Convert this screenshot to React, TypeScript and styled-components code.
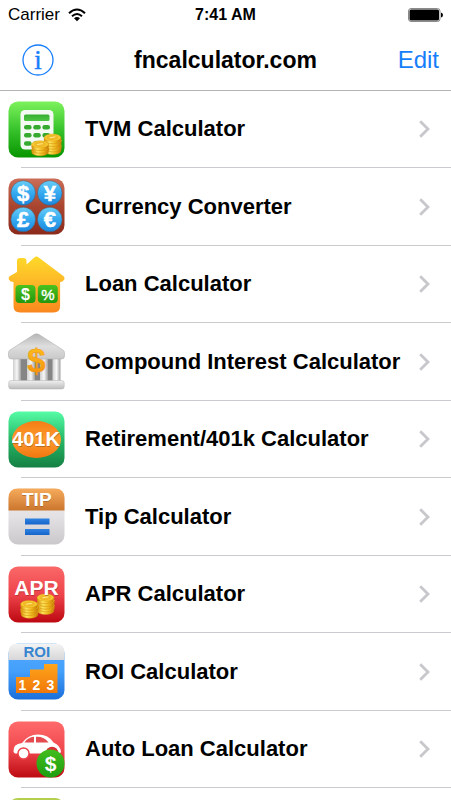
import React from "react";
import styled, { createGlobalStyle } from "styled-components";

const GlobalStyle = createGlobalStyle`
  * { box-sizing: border-box; }
  body {
    margin: 0;
    background: #fff;
    color: #000;
    font-family: "Liberation Sans", Arial, Helvetica, sans-serif;
  }
`;

const Screen = styled.div`
  display: flex;
  flex-direction: column;
  height: 100vh;
  overflow: hidden;
`;

const TopBar = styled.header`
  flex: none;
  border-bottom: 1px solid #b4b4b4;
`;

const StatusBar = styled.div`
  display: grid;
  grid-template-columns: 1fr auto 1fr;
  align-items: center;
  height: 30px;
  padding: 0 8px;
`;

const Carrier = styled.div`
  display: flex;
  align-items: center;
  gap: 8px;
  font-size: 17px;
  line-height: 20px;
`;

const Clock = styled.time`
  font-size: 16px;
  line-height: 20px;
  font-weight: bold;
`;

const Battery = styled.svg`
  justify-self: end;
`;

const NavBar = styled.nav`
  display: grid;
  grid-template-columns: 1fr auto 1fr;
  align-items: center;
  height: 60px;
  padding: 0 12px;
`;

const Title = styled.h1`
  margin: 0;
  font-size: 23px;
  line-height: 28px;
  font-weight: bold;
`;

const BarButton = styled.button<{ $end?: boolean }>`
  justify-self: ${(p) => (p.$end ? "end" : "start")};
  display: flex;
  padding: ${(p) => (p.$end ? "0" : "0 10px")};
  border: 0;
  background: none;
  color: #177efb;
  font-family: inherit;
  font-size: 24px;
  line-height: 28px;
  cursor: pointer;
`;

const List = styled.ul`
  flex: 1;
  min-height: 0;
  overflow: hidden;
  margin: 0;
  padding: 0;
  list-style: none;
`;

const Row = styled.li`
  display: flex;
  flex-direction: column;
  height: 77px;
  &:nth-child(even) { height: 78px; }
  &::after {
    content: "";
    height: 1px;
    margin-left: 21px;
    background: #cbcacf;
  }
`;

const RowLink = styled.a`
  flex: 1;
  display: flex;
  align-items: center;
  padding: 0 21px 0 8px;
  color: inherit;
  text-decoration: none;
`;

const RowLabel = styled.span`
  flex: 1;
  margin-left: 20px;
  font-size: 22px;
  line-height: 28px;
  font-weight: bold;
  white-space: nowrap;
`;

const ChevronSvg = styled.svg`
  flex: none;
  display: block;
`;

const IconSvg = styled.svg`
  flex: none;
  display: block;
  font-family: "Liberation Sans", Arial, sans-serif;
  font-weight: bold;
`;

type IconProps = { id: string; stops?: string[]; children?: React.ReactNode };

function Icon({ id, stops, children }: IconProps) {
  return (
    <IconSvg width="57" height="57" viewBox="0 0 57 57" aria-hidden="true">
      {stops && <Gradient id={id} stops={stops} />}
      {stops && <rect x="0.5" y="0.5" width="56" height="56" rx="9.5" fill={`url(#${id})`} />}
      {children}
    </IconSvg>
  );
}

function Gradient({ id, stops, across }: { id: string; stops: string[]; across?: boolean }) {
  return (
    <defs>
      <linearGradient id={id} x1="0" y1="0" x2={across ? 1 : 0} y2={across ? 0 : 1}>
        {stops.map((c, i) => (
          <stop key={i} offset={i / (stops.length - 1)} stopColor={c} />
        ))}
      </linearGradient>
    </defs>
  );
}

function Coins({ id, x, y, levels }: { id: string; x: number; y: number; levels: number }) {
  const layers = Array.from({ length: levels }, (_, i) => levels - 1 - i);
  return (
    <g transform={`translate(${x} ${y})`}>
      <Gradient id={id} across stops={["#d98f08", "#ffe45c", "#f0b61c", "#c87a04"]} />
      {layers.map((n) => (
        <g key={n} transform={`translate(${n % 2 ? 0.5 : 0} ${n * 2.7})`}>
          <path d="M-8.3 0v2.4c0 5 16.6 5 16.6 0V0z" fill={`url(#${id})`} stroke="#c98a0c" strokeWidth="0.4" />
          <ellipse rx="8.3" ry="3.6" fill="#f8cb32" stroke="#d79a14" strokeWidth="0.4" />
        </g>
      ))}
      <ellipse rx="5.6" ry="2.1" fill="#f3bc2a" stroke="#dfa31c" strokeWidth="0.4" />
      <path d="M-3 .3 2.8-.7" stroke="#ffe889" strokeWidth="1" />
    </g>
  );
}

function TvmIcon() {
  return (
    <Icon id="tvm" stops={["#7cf25c", "#38c32c", "#079500"]}>
      <rect x="12.5" y="9" width="33" height="39.5" rx="4.5" fill="#f4faf3" />
      <Gradient id="tvmKey" stops={["#35ae30", "#4fc544"]} />
      <rect x="16" y="13.5" width="25.5" height="6.5" rx="1.5" fill="url(#tvmKey)" />
      {[26.3, 34.3, 42.5].map((y) =>
        [16, 25.2, 34.4].map((x) => (
          <rect key={`${x}-${y}`} x={x} y={y - 2.2} width="7.6" height="4.5" rx="2.1" fill="#35aa2e" />
        )),
      )}
      <Coins id="tvmCoinB" x={44.5} y={36.5} levels={5} />
      <Coins id="tvmCoinA" x={32} y={43.3} levels={3} />
    </Icon>
  );
}

function CurrencyIcon() {
  const coins = [
    { s: "$", x: 15.2, y: 15 },
    { s: "¥", x: 41.8, y: 15 },
    { s: "£", x: 15.2, y: 41.5 },
    { s: "€", x: 41.8, y: 41.5 },
  ];
  return (
    <Icon id="cur" stops={["#cb6d58", "#a9452f", "#8b2a1b"]}>
      <Gradient id="curBall" stops={["#69cdf8", "#35aaf0", "#1b86dc"]} />
      {coins.map((c) => (
        <g key={c.s}>
          <circle cx={c.x} cy={c.y} r="12.3" fill="url(#curBall)" stroke="#53505c" strokeWidth="0.5" />
          <text x={c.x} y={c.y + 7.5} textAnchor="middle" fontSize="22" fill="#fff" stroke="#fff" strokeWidth="0.5">
            {c.s}
          </text>
        </g>
      ))}
    </Icon>
  );
}

function LoanIcon() {
  return (
    <Icon id="loan">
      <Gradient id="house" stops={["#fdd929", "#fdb527", "#fb871e"]} />
      <Gradient id="tag" stops={["#4ac21e", "#23970d"]} />
      <path
        d="M9 16V5q0-3 3-3h3.500q3 0 3 3v3.500L26.300 1.500q2.200-1.800 4.400 0L55.300 20q1.900 1.600.8 3.800-1.300 2.200-4 2.200V50q0 6.500-6.500 6.500h-33.600Q5.500 56.500 5.500 50V26Q2 26 1 23.800 0 21.500 2 20z"
        fill="url(#house)"
      />
      <rect x="7.500" y="29" width="20" height="18" rx="4" fill="url(#tag)" />
      <rect x="29.800" y="29" width="20" height="18" rx="4" fill="url(#tag)" />
      <text x="17.500" y="43.500" textAnchor="middle" fontSize="16" fill="#fff">$</text>
      <text x="39.800" y="43.500" textAnchor="middle" fontSize="15" fontWeight="normal" fill="#fff" stroke="#fff" strokeWidth="0.400">%</text>
    </Icon>
  );
}

function CompoundIcon() {
  return (
    <Icon id="bank">
      <Gradient id="roof" stops={["#b5b5b5", "#dedede", "#c9c9c9"]} />
      <Gradient id="pillar" across stops={["#cfcfcf", "#f7f7f7", "#a0a0a0"]} />
      <Gradient id="base" stops={["#f0f0f0", "#bcbcbc"]} />
      <Gradient id="dollar" stops={["#ffc61e", "#f38c0d"]} />
      <rect x="6" y="26" width="45" height="22" fill="#858585" />
      {[5, 19, 32, 44.500].map((x) => (
        <rect key={x} x={x} y="26" width="8" height="22" fill="url(#pillar)" />
      ))}
      <path d="M26 1.500q2.500-1.500 5 0L55 17q1.500 1 1.500 3v3q0 3-3 3h-50q-3 0-3-3v-3q0-2 1.500-3z" fill="url(#roof)" stroke="#a8a8a8" strokeWidth="0.5" />
      <rect x="0.700" y="47.500" width="55.500" height="8.500" rx="2.500" fill="url(#base)" stroke="#b0b0b0" strokeWidth="0.500" />
      <text x="28.500" y="38.500" textAnchor="middle" fontSize="33" fill="url(#dollar)" stroke="#e8910f" strokeWidth="0.400">$</text>
    </Icon>
  );
}

function RetirementIcon() {
  return (
    <Icon id="ret" stops={["#55fca6", "#26b767", "#158042"]}>
      <Gradient id="egg" stops={["#f47d16", "#ff9b2e", "#f07610"]} />
      <ellipse cx="28.500" cy="28.500" rx="24.500" ry="18.500" fill="url(#egg)" />
      <text x="28.400" y="35.800" textAnchor="middle" fontSize="20" fill="#7d4b14" opacity="0.5">401K</text>
      <text x="28" y="35" textAnchor="middle" fontSize="20" fill="#fff">401K</text>
    </Icon>
  );
}

function TipIcon() {
  return (
    <Icon id="tip" stops={["#f0eff0", "#e3e1e3", "#cac8ca"]}>
      <Gradient id="tipTop" stops={["#f6ab5c", "#cb762d"]} />
      <Gradient id="tipBar" stops={["#2d83e2", "#1763ca"]} />
      <path d="M.5 22.500V10q0-9.500 9.500-9.500h37q9.500 0 9.500 9.500v12.500z" fill="url(#tipTop)" />
      <text x="28.800" y="19" textAnchor="middle" fontSize="19" fill="#8a531e" opacity="0.5">TIP</text>
      <text x="28.800" y="18" textAnchor="middle" fontSize="19" fill="#fff">TIP</text>
      <rect x="17" y="30.500" width="24.500" height="6" fill="url(#tipBar)" />
      <rect x="17" y="41" width="24.500" height="6" fill="url(#tipBar)" />
    </Icon>
  );
}

function AprIcon() {
  return (
    <Icon id="apr" stops={["#fa6868", "#ee444b", "#bd0811"]}>
      <Coins id="aprCoinB" x={37.500} y={31.500} levels={5} />
      <text x="28.800" y="29.500" textAnchor="middle" fontSize="21" fill="#7d141b" opacity="0.4">APR</text>
      <text x="28.500" y="28.700" textAnchor="middle" fontSize="21" fill="#fff">APR</text>
      <Coins id="aprCoinA" x={21} y={38} levels={4} />
    </Icon>
  );
}

function RoiIcon() {
  return (
    <Icon id="roi" stops={["#56abff", "#439ffa", "#1b6fda"]}>
      <Gradient id="roiTop" stops={["#f4f4f4", "#d7d7d9"]} />
      <Gradient id="steps" stops={["#ffa51b", "#f0780a"]} />
      <path d="M.5 17V10Q.5.500 10 .5h37q9.500 0 9.500 9.500v7z" fill="url(#roiTop)" />
      <text x="28.800" y="14.400" textAnchor="middle" fontSize="15" fill="#3585d0">ROI</text>
      <path d="M8 50V34h14v-7.500h14V21h13.500v29z" fill="url(#steps)" />
      {["1", "2", "3"].map((n, i) => (
        <text key={n} x={14.500 + i * 14} y="47" textAnchor="middle" fontSize="14" fill="#fff">{n}</text>
      ))}
    </Icon>
  );
}

function AutoIcon() {
  return (
    <Icon id="auto" stops={["#ff6a6a", "#f0484e", "#bd0a13"]}>
      <path d="M5.500 31q-1-8 8.500-9 6-8.500 16-8.500 10.500 0 15.500 8 7 3 7.500 9.500l-1.500 1.500H7z" fill="#fff" />
      <path d="M16.500 21.500q3.500-5.300 9.500-5.700v5.700zM28 15.800q8.500-.3 12.500 5.700H28z" fill="#e34b50" />
      <circle cx="15.500" cy="32.500" r="6.300" fill="#ec4249" />
      <circle cx="15.500" cy="32.500" r="4.800" fill="#fff" />
      <circle cx="44" cy="32" r="6.300" fill="#d92e35" />
      <Gradient id="badge" stops={["#42bd1e", "#1d9d10"]} />
      <circle cx="42.500" cy="42.500" r="14" fill="url(#badge)" />
      <text x="42.500" y="50" textAnchor="middle" fontSize="21" fill="#fff">$</text>
    </Icon>
  );
}

function LimeIcon() {
  return (
    <IconSvg width="57" height="57" viewBox="0 0 57 57" aria-hidden="true">
      <rect x="0.5" y="0" width="56" height="56.5" rx="9.5" fill="#b4cf4c" />
    </IconSvg>
  );
}

function Chevron() {
  return (
    <ChevronSvg width="11" height="18" viewBox="0 0 11 18" aria-hidden="true">
      <path d="M1.200 1.200 9 9l-7.800 7.800" fill="none" stroke="#c7c7cc" strokeWidth="2.800" />
    </ChevronSvg>
  );
}

const calculators = [
  { label: "TVM Calculator", Glyph: TvmIcon },
  { label: "Currency Converter", Glyph: CurrencyIcon },
  { label: "Loan Calculator", Glyph: LoanIcon },
  { label: "Compound Interest Calculator", Glyph: CompoundIcon },
  { label: "Retirement/401k Calculator", Glyph: RetirementIcon },
  { label: "Tip Calculator", Glyph: TipIcon },
  { label: "APR Calculator", Glyph: AprIcon },
  { label: "ROI Calculator", Glyph: RoiIcon },
  { label: "Auto Loan Calculator", Glyph: AutoIcon },
];

export default function App() {
  return (
    <Screen>
      <GlobalStyle />
      <TopBar>
        <StatusBar>
          <Carrier>
            Carrier
            <svg width="18" height="14" viewBox="0 0 18 14" aria-hidden="true">
              <g fill="none" stroke="#000" strokeWidth="2">
                <path d="M1 5.200q8-7.400 16 0" />
                <path d="M4 8.300q5-4.500 10 0" />
              </g>
              <path d="M6 10.200q3-2.400 6 0L9 13.200z" />
            </svg>
          </Carrier>
          <Clock>7:41 AM</Clock>
          <Battery width="35" height="14" viewBox="0 0 35 14" aria-hidden="true">
            <rect x="0.500" y="0.500" width="31.500" height="13" rx="2.500" fill="#fff" stroke="#8a8a8a" />
            <rect x="1.500" y="1.500" width="29.500" height="11" rx="1.500" />
            <path d="M33 4.500q2 .5 2 2.500t-2 2.500z" />
          </Battery>
        </StatusBar>
        <NavBar>
          <BarButton type="button" aria-label="Info">
            <svg width="32" height="32" viewBox="0 0 32 32" aria-hidden="true">
              <circle cx="16" cy="16" r="15" fill="none" stroke="#177efb" strokeWidth="1.300" />
              <text x="16" y="25" textAnchor="middle" fontFamily="Liberation Serif, serif" fontSize="27" fill="#177efb" stroke="#177efb" strokeWidth="0.400">i</text>
            </svg>
          </BarButton>
          <Title>fncalculator.com</Title>
          <BarButton type="button" $end>Edit</BarButton>
        </NavBar>
      </TopBar>
      <List>
        {calculators.map(({ label, Glyph }) => (
          <Row key={label}>
            <RowLink href="#">
              <Glyph />
              <RowLabel>{label}</RowLabel>
              <Chevron />
            </RowLink>
          </Row>
        ))}
        <Row>
          <RowLink href="#">
            <LimeIcon />
          </RowLink>
        </Row>
      </List>
    </Screen>
  );
}
